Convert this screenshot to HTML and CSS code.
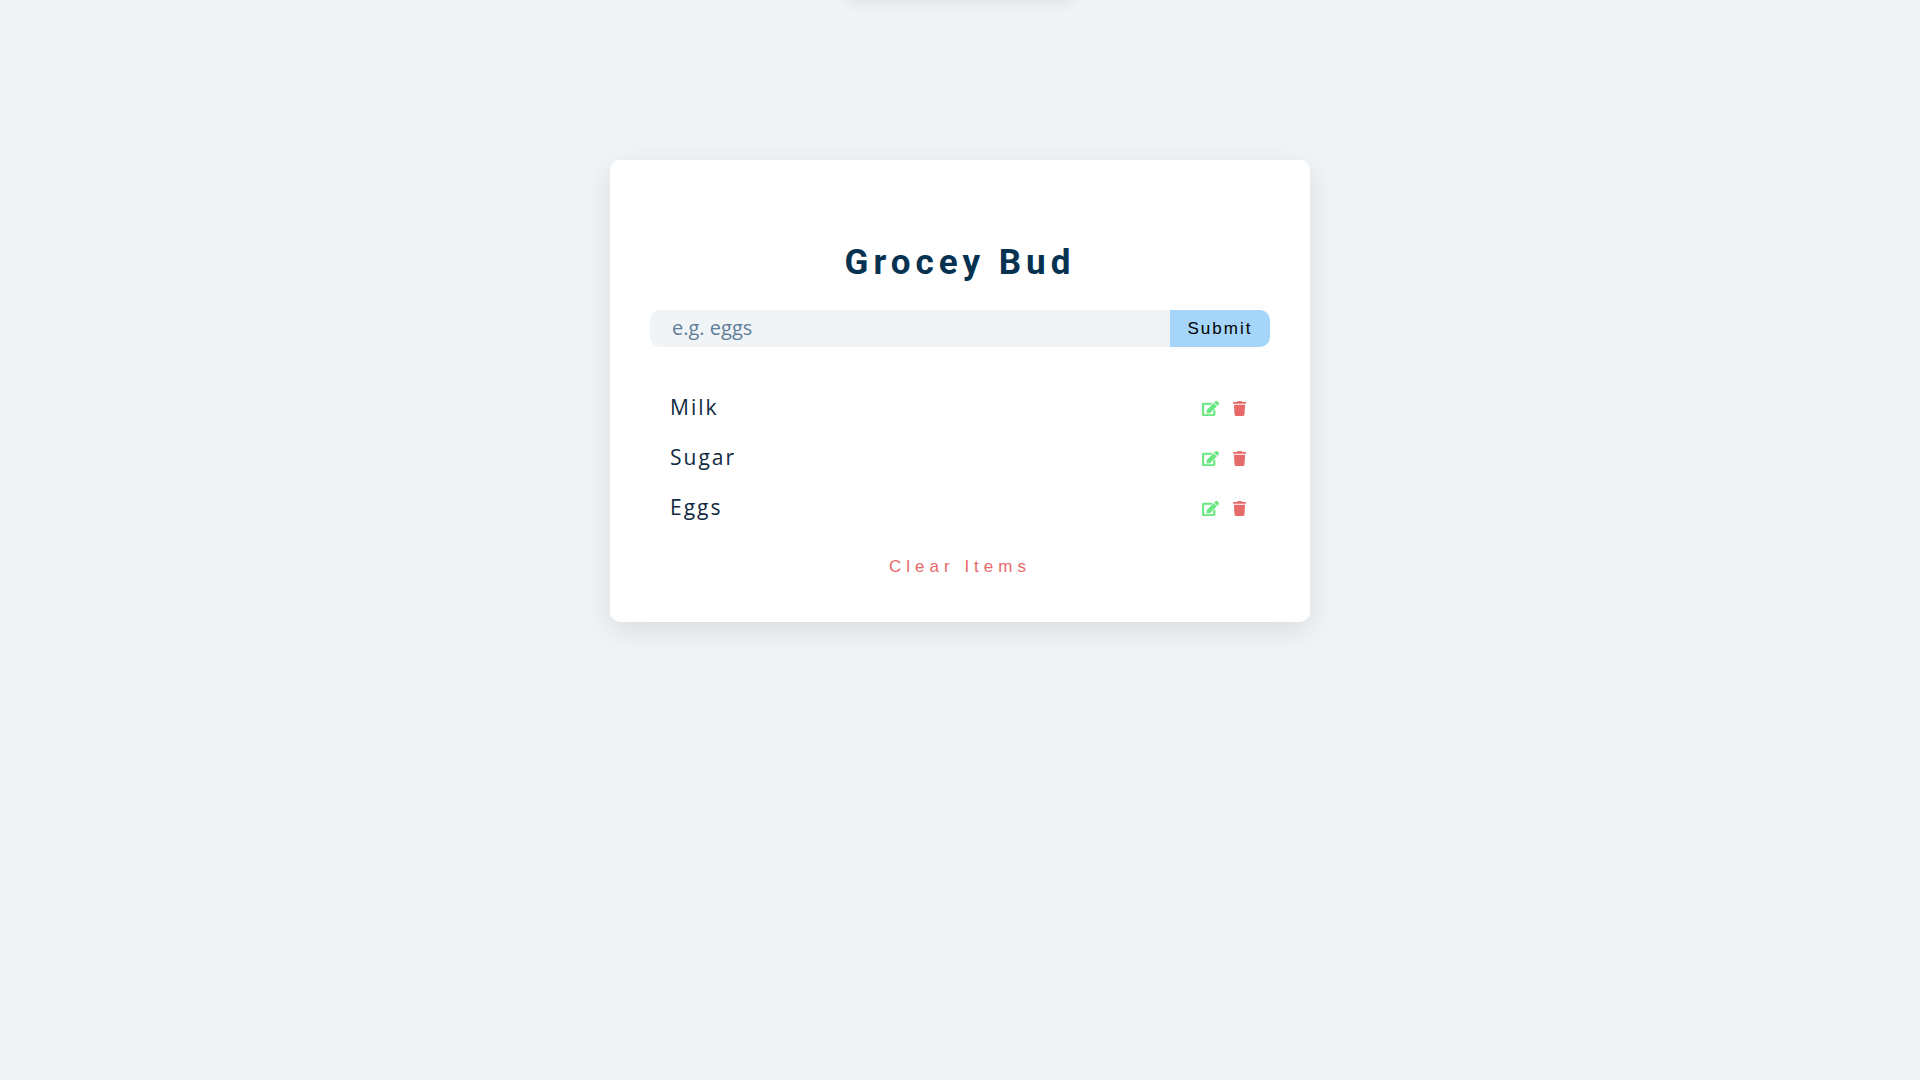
FILE: index.html
```html
<!DOCTYPE html>
<html lang="en">
<head>
<meta charset="utf-8">
<meta name="viewport" content="width=device-width, initial-scale=1">
<title>Grocey Bud</title>
<link rel="stylesheet" href="styles.css">
</head>
<body>
<svg class="sprite" aria-hidden="true">
  <symbol id="edit" viewBox="0 0 576 512"><path d="M402.6 83.2l90.2 90.2c3.8 3.8 3.8 10 0 13.800L274.400 405.600l-92.800 10.300c-12.400 1.400-22.900-9.100-21.500-21.500l10.300-92.800L388.800 83.200c3.800-3.800 10-3.800 13.800 0zm162-22.900l-48.800-48.800c-15.200-15.200-39.900-15.200-55.200 0l-35.400 35.400c-3.800 3.800-3.800 10 0 13.800l90.200 90.200c3.800 3.800 10 3.800 13.800 0l35.400-35.400c15.200-15.300 15.200-40 0-55.200zM384 346.200V448H64V128h229.800c3.200 0 6.200-1.300 8.500-3.500l40-40c7.600-7.600 2.200-20.500-8.500-20.500H48C21.500 64 0 85.500 0 112v352c0 26.500 21.500 48 48 48h352c26.500 0 48-21.500 48-48V306.200c0-10.700-12.900-16-20.500-8.500l-40 40c-2.200 2.300-3.500 5.300-3.500 8.500z"/></symbol>
  <symbol id="trash" viewBox="0 0 448 512"><path d="M432 32H312l-9.400-18.700A24 24 0 0 0 281.100 0H166.800a23.720 23.720 0 0 0-21.400 13.300L136 32H16A16 16 0 0 0 0 48v32a16 16 0 0 0 16 16h416a16 16 0 0 0 16-16V48a16 16 0 0 0-16-16zM32 128l21.200 339a48 48 0 0 0 47.900 45h245.800a48 48 0 0 0 47.900-45L416 128z"/></symbol>
</svg>
<div class="toast" role="status"></div>
<main class="card">
  <h1 class="title">Grocey Bud</h1>
  <form class="entry">
    <input class="entry-input" type="text" aria-label="Grocery item" placeholder="e.g. eggs">
    <button class="entry-submit" type="button">Submit</button>
  </form>
  <ul class="items">
    <li class="item"><span class="item-name">Milk</span>
      <button class="icon-button edit" type="button" aria-label="Edit Milk"><svg class="icon-edit"><use href="#edit"/></svg></button>
      <button class="icon-button trash" type="button" aria-label="Delete Milk"><svg class="icon-trash"><use href="#trash"/></svg></button></li>
    <li class="item"><span class="item-name">Sugar</span>
      <button class="icon-button edit" type="button" aria-label="Edit Sugar"><svg class="icon-edit"><use href="#edit"/></svg></button>
      <button class="icon-button trash" type="button" aria-label="Delete Sugar"><svg class="icon-trash"><use href="#trash"/></svg></button></li>
    <li class="item"><span class="item-name">Eggs</span>
      <button class="icon-button edit" type="button" aria-label="Edit Eggs"><svg class="icon-edit"><use href="#edit"/></svg></button>
      <button class="icon-button trash" type="button" aria-label="Delete Eggs"><svg class="icon-trash"><use href="#trash"/></svg></button></li>
  </ul>
  <button class="clear" type="button">Clear Items</button>
</main>
</body>
</html>
```
FILE: styles.css
```css
* {
  box-sizing: border-box;
}

body {
  margin: 0;
  padding: 160px 20px 40px;
  background: #f0f4f7;
  color: #102a42;
  font-family: "Open Sans", sans-serif;
  font-size: 20px;
}

button {
  border: 0;
  padding: 0;
  background: none;
  font-family: "Liberation Sans", Arial, sans-serif;
  font-size: 17px;
  cursor: pointer;
}

.sprite {
  display: none;
}

.toast {
  position: absolute;
  bottom: 100%;
  left: 50%;
  width: 230px;
  height: 40px;
  transform: translateX(-50%);
  border-radius: 10px;
  box-shadow: 0 4px 14px rgba(0, 0, 0, 0.07);
}

.card {
  display: flex;
  flex-direction: column;
  max-width: 700px;
  margin: 0 auto;
  padding: 82px 40px 40px;
  border-radius: 10px;
  background: #fff;
  box-shadow: 0 8px 30px rgba(0, 0, 0, 0.1);
}

.title {
  margin: 0 0 26px;
  color: #063251;
  font: bold 35px/42px Roboto, sans-serif;
  letter-spacing: 5px;
  text-align: center;
}

.entry {
  display: flex;
  height: 37px;
}

.entry-input {
  flex: 1;
  min-width: 0;
  padding: 0 22px 2px;
  border: 0;
  border-radius: 10px 0 0 10px;
  background: #f0f4f7;
  color: #102a42;
  font: inherit;
}

.entry-input::placeholder {
  color: #617d98;
}

.entry-submit {
  width: 100px;
  border-radius: 0 10px 10px 0;
  background: #a5d6fa;
  color: #000;
  letter-spacing: 2px;
}

.items {
  margin: 35px 0 0;
  padding: 0 20px;
  list-style: none;
}

.item {
  display: flex;
  align-items: center;
  height: 50px;
}

.item-name {
  flex: 1;
  font-size: 21px;
  letter-spacing: 2px;
}

.icon-button {
  display: flex;
  padding: 2px 0 0;
}

.icon-button svg {
  height: 15px;
  fill: currentColor;
}

.icon-edit {
  width: 17px;
  stroke: currentColor;
  stroke-width: 10px;
}

.icon-trash {
  width: 13px;
}

.edit {
  margin-right: 14px;
  color: #69e781;
}

.trash {
  margin-right: 4px;
  color: #e66a6a;
}

.clear {
  align-self: center;
  margin-top: 20px;
  color: #e66a6a;
  line-height: 30px;
  letter-spacing: 5px;
}
```
